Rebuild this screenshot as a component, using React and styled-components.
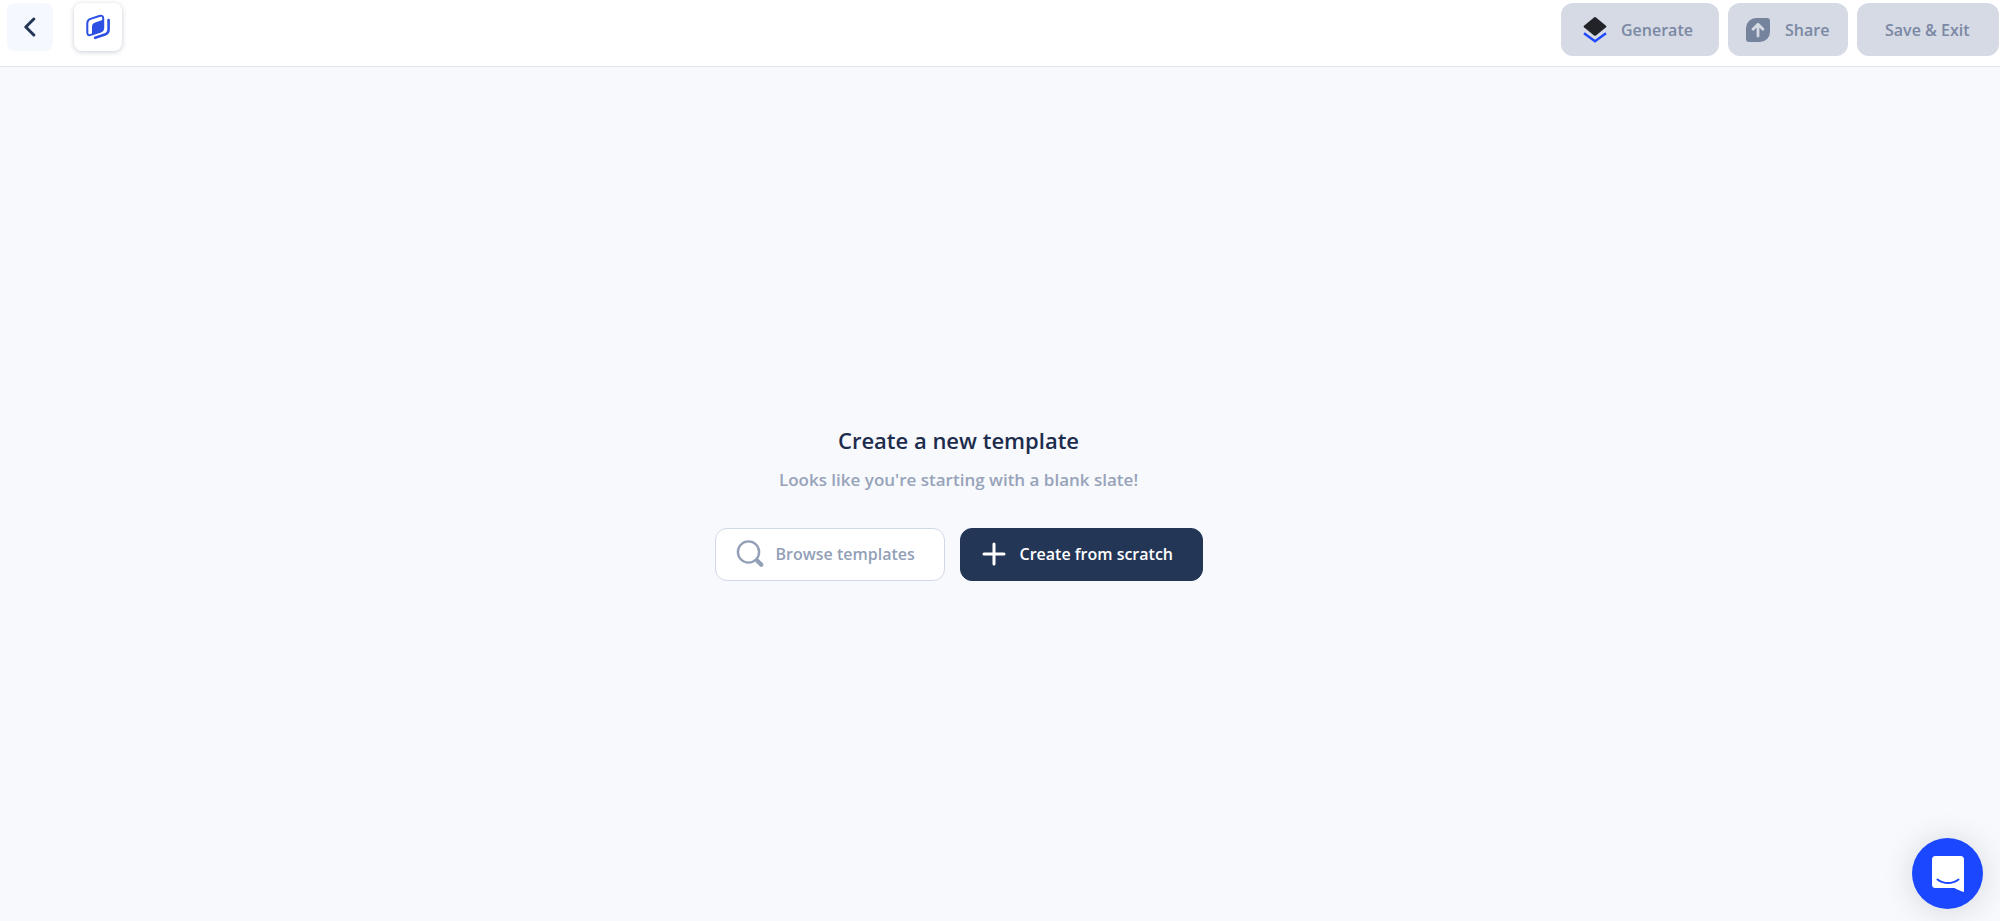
import React from "react";
import styled, { createGlobalStyle } from "styled-components";

function App() {
  return (
    <Page>
      <GlobalStyle />
      <Header>
        <HeaderGroup $gap="21px">
          <BackButton type="button" aria-label="Back">
            <BackIcon />
          </BackButton>
          <LogoButton type="button" aria-label="Template">
            <LogoIcon />
          </LogoButton>
        </HeaderGroup>
        <HeaderGroup $gap="9px">
          <HeaderButton type="button" $width="158px" $pad="22px" $gap="14px">
            <GenerateIcon />
            <span>Generate</span>
          </HeaderButton>
          <HeaderButton type="button" $width="120px" $pad="18px" $gap="15px">
            <ShareIcon />
            <span>Share</span>
          </HeaderButton>
          <HeaderButton type="button" $width="142px" $pad="28px">
            Save &amp; Exit
          </HeaderButton>
        </HeaderGroup>
      </Header>
      <Main>
        <Title>Create a new template</Title>
        <Subtitle>Looks like you're starting with a blank slate!</Subtitle>
        <Actions>
          <ActionButton type="button" $width="230px" $pad="20px" $gap="12px">
            <SearchIcon />
            <span>Browse templates</span>
          </ActionButton>
          <ActionButton type="button" $primary $width="243px" $pad="21px" $gap="14px">
            <PlusIcon />
            <span>Create from scratch</span>
          </ActionButton>
        </Actions>
      </Main>
      <ChatButton type="button" aria-label="Open chat">
        <ChatIcon />
      </ChatButton>
    </Page>
  );
}

export default App;

const BackIcon = () => (
  <svg width="12" height="20" viewBox="0 0 12 20" fill="none" aria-hidden="true">
    <path
      d="M9.800 2 1.800 10l8 8"
      stroke="#243656"
      strokeWidth="3"
      strokeLinecap="round"
      strokeLinejoin="round"
    />
  </svg>
);

const LogoIcon = () => (
  <svg width="26" height="26" viewBox="0 0 26 26" fill="none" aria-hidden="true">
    <path
      d="M2.300 9.200c0-2.400 1-3.600 3.200-4.300l8.800-2.900c2.700-.8 3.900.1 3.900 2.300v9.400c0 2.200-1 3.400-3.200 4.200l-9.300 3c-2.300.7-3.400-.1-3.400-2.300z"
      stroke="#2b50e3"
      strokeWidth="2"
    />
    <path d="M7 13c0-2.400 1-3.800 3.200-4.500l8-2.700v8.500c0 2-.9 3-2.700 3.600L7 20.700z" fill="#2b50e3" />
    <path
      d="M23.600 6v9.200c0 2.900-1.100 4.400-3.700 5.300l-9.700 3.300"
      stroke="#2b50e3"
      strokeWidth="2.600"
      strokeLinecap="round"
    />
  </svg>
);

const GenerateIcon = () => (
  <svg width="24" height="26" viewBox="0 0 24 26" fill="none" aria-hidden="true">
    <path d="M11 .5q1-.8 2 0l10 8.300q.8.7 0 1.400l-10 8.200q-1 .8-2 0L1 10.200q-.8-.7 0-1.400z" fill="#212329" />
    <path d="M1 16.300l11 8 11-8" stroke="#1f49ff" strokeWidth="2.400" />
  </svg>
);

const ShareIcon = () => (
  <svg width="24" height="24" viewBox="0 0 24 24" fill="none" aria-hidden="true">
    <path d="M10 0h11a3 3 0 0 1 3 3v11a10 10 0 0 1-10 10H3a3 3 0 0 1-3-3V10A10 10 0 0 1 10 0z" fill="#76839d" />
    <path
      d="M12 18V6.500M7 11.200l5-5 5 5"
      stroke="#d5dae5"
      strokeWidth="2.800"
      strokeLinecap="round"
      strokeLinejoin="round"
    />
  </svg>
);

const SearchIcon = () => (
  <svg width="28" height="28" viewBox="0 0 28 28" fill="none" aria-hidden="true">
    <circle cx="12.500" cy="12" r="10.600" stroke="#939fb7" strokeWidth="2.400" />
    <path d="M19.500 19l2 2" stroke="#939fb7" strokeWidth="2.600" />
    <path d="M21.300 20.800l4 4" stroke="#939fb7" strokeWidth="4.200" strokeLinecap="round" />
  </svg>
);

const PlusIcon = () => (
  <svg width="24" height="24" viewBox="0 0 24 24" fill="none" aria-hidden="true">
    <path d="M12 2v20M2 12h20" stroke="#ffffff" strokeWidth="3" strokeLinecap="round" />
  </svg>
);

const ChatIcon = () => (
  <svg width="32" height="36" viewBox="0 0 32 36" fill="none" aria-hidden="true">
    <path d="M3.500 0h25A3.500 3.500 0 0 1 32 3.500V36c-3.500-1-6.500-2.200-9.500-4h-19A3.500 3.500 0 0 1 0 28.500v-25A3.500 3.500 0 0 1 3.500 0z" fill="#ffffff" />
    <path
      d="M5.500 23.500c6.200 4.800 14.800 4.800 21 0"
      stroke="#1a47ff"
      strokeWidth="2"
      strokeLinecap="round"
    />
  </svg>
);

const GlobalStyle = createGlobalStyle`
  * {
    box-sizing: border-box;
  }

  body {
    margin: 0;
    background-color: #f7f9fd;
    font-family: "Segoe UI", "Open Sans", "Noto Sans", sans-serif;
  }

  button {
    font: inherit;
    cursor: pointer;
  }
`;

const Page = styled.div`
  min-height: 100vh;
  display: flex;
  flex-direction: column;
`;

const Header = styled.header`
  height: 67px;
  display: flex;
  justify-content: space-between;
  align-items: flex-start;
  padding: 3px 1px 0 7px;
  background-color: white;
  border-bottom: 1px solid #dfe5ef;
`;

const HeaderGroup = styled.div`
  display: flex;
  gap: ${(props) => props.$gap};
`;

const BackButton = styled.button`
  width: 46px;
  height: 48px;
  display: flex;
  justify-content: center;
  align-items: center;
  padding: 0;
  border: none;
  border-radius: 8px;
  background-color: #f5f8ff;
`;

const LogoButton = styled(BackButton)`
  width: 48px;
  background-color: white;
  box-shadow: 0 1px 5px rgba(36, 54, 86, 0.25);
`;

const HeaderButton = styled.button`
  width: ${(props) => props.$width};
  height: 53px;
  display: flex;
  align-items: center;
  gap: ${(props) => props.$gap};
  padding: 0 0 0 ${(props) => props.$pad};
  border: none;
  border-radius: 12px;
  background-color: #d5dae5;
  color: #7b88a3;
  font-size: 16px;
  font-weight: 600;
  line-height: 24px;
  white-space: nowrap;
`;

const Main = styled.main`
  flex: 1;
  display: flex;
  flex-direction: column;
  justify-content: center;
  align-items: center;
  padding: 16px 83px 0 0;
`;

const Title = styled.h1`
  margin: 0;
  color: #1d2c4d;
  font-size: 22px;
  font-weight: 600;
  line-height: 32px;
`;

const Subtitle = styled.p`
  margin: 12px 0 36px;
  color: #97a3b9;
  font-size: 17px;
  font-weight: 600;
  line-height: 24px;
`;

const Actions = styled.div`
  display: flex;
  gap: 15px;
`;

const ActionButton = styled(HeaderButton)`
  border: 1px solid ${(props) => (props.$primary ? "#243656" : "#d0d8e6")};
  background-color: ${(props) => (props.$primary ? "#243656" : "white")};
  color: ${(props) => (props.$primary ? "white" : "#939fb7")};
`;

const ChatButton = styled.button`
  position: fixed;
  right: 17px;
  bottom: 12px;
  width: 71px;
  height: 71px;
  display: flex;
  justify-content: center;
  align-items: center;
  padding: 0;
  border: none;
  border-radius: 50%;
  background-color: #1a47ff;
  box-shadow: 0 2px 32px rgba(0, 0, 0, 0.14);
`;
